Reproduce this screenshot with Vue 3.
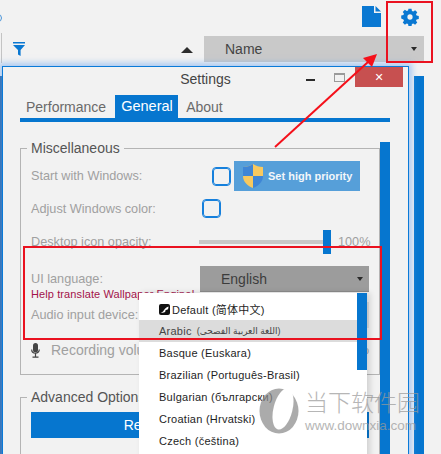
<script setup>
const languages = [
  { name: 'Default (简体中文)', icon: true },
  { name: 'Arabic', native: '(اللغة العربية الفصحى)', hover: true },
  { name: 'Basque (Euskara)' },
  { name: 'Brazilian (Português-Brasil)' },
  { name: 'Bulgarian (български)' },
  { name: 'Croatian (Hrvatski)' },
  { name: 'Czech (čeština)' }
];
</script>

<template>
  <div class="page">
    <span class="edge-line"></span>
    <span class="edge-desk"></span>
    <span class="edge-search"></span>

    <div class="icon-row">
      <svg class="doc" width="19" height="21" viewBox="0 0 19 21">
        <path d="M0 0H12V7H19V21H0Z" fill="#0a78d2" />
        <path d="M13.5 0L19 5.5H13.5Z" fill="#0a78d2" />
      </svg>
      <svg class="gear" width="18" height="18" viewBox="-1 -1 26 26">
        <path fill="#0a78d2" fill-rule="evenodd" d="M9.8 0h4.4l.6 3.2 1.9.8 2.7-1.8 3.1 3.1-1.8 2.7.8 1.9 3.2.6v4.4l-3.2.6-.8 1.9 1.8 2.7-3.1 3.1-2.7-1.8-1.9.8-.6 3.2H9.8l-.6-3.2-1.9-.8-2.7 1.8-3.1-3.1 1.8-2.7-.8-1.9L-.7 14.2V9.8l3.2-.6.8-1.9-1.8-2.7 3.1-3.1 2.7 1.8 1.9-.8zM12 8.2a3.8 3.8 0 1 0 0 7.6 3.8 3.8 0 0 0 0-7.6z" />
      </svg>
    </div>

    <div class="sort-row">
      <svg class="filter" width="12" height="14" viewBox="0 0 12 14">
        <path d="M0 0H12V1.4H0ZM0 3H12L7.6 8V14L5 12.6V8Z" fill="#0a78d2" />
      </svg>
      <span class="sort-up"></span>
      <div class="sort-select">
        <span>Name</span>
        <i class="caret"></i>
      </div>
    </div>

    <div class="behind">
      <div class="behind-bar"></div>
    </div>

    <div class="window">
      <div class="titlebar">
        <span></span>
        <span class="title">Settings</span>
        <div class="win-btns">
          <span class="btn-min"></span>
          <span class="btn-max"></span>
          <span class="btn-close">✕</span>
        </div>
      </div>

      <div class="tabs">
        <span class="tab">Performance</span>
        <span class="tab active">General</span>
        <span class="tab">About</span>
      </div>

      <div class="content">
        <div class="groups">
          <fieldset class="group misc">
            <legend>Miscellaneous</legend>
            <div class="row row-start">
              <label>Start with Windows:</label>
              <span class="check first"></span>
              <button class="priority">
                <svg width="20" height="24" viewBox="0 0 20 24">
                  <path d="M10 0C7 2 4 3 0 3V12C0 18 5 22 10 24Z" fill="#f8c95f" />
                  <path d="M10 0C13 2 16 3 20 3V12H10Z" fill="#f8c95f" />
                  <path d="M10 0C7 2 4 3 0 3V12H10Z" fill="#3f86d6" />
                  <path d="M10 12H20C20 18 15 22 10 24Z" fill="#3f86d6" />
                </svg>
                Set high priority
              </button>
            </div>
            <div class="row row-adjust">
              <label>Adjust Windows color:</label>
              <span class="check"></span>
            </div>
            <div class="row row-opacity">
              <label>Desktop icon opacity:</label>
              <div class="slider"><i></i></div>
              <span class="pct">100%</span>
            </div>
            <div class="row row-lang">
              <label>UI language:</label>
              <div class="select">
                <span>English</span>
                <i class="caret"></i>
              </div>
            </div>
            <div class="help">Help translate Wallpaper Engine!</div>
            <div class="row row-audio">
              <label>Audio input device:</label>
              <div class="select light"></div>
            </div>
            <div class="row row-rec">
              <svg width="9" height="15" viewBox="0 0 9 15">
                <rect x="2" y="0" width="5" height="9.5" rx="2.5" fill="#444" />
                <path d="M.7 6.5c0 5 7.6 5 7.6 0M4.5 10.5V13.5M1.5 14.2H7.5" fill="none" stroke="#444" stroke-width="1.2" />
              </svg>
              <label>Recording volume:</label>
              <span class="rec-pct">100%</span>
            </div>
          </fieldset>

          <fieldset class="group advanced">
            <legend>Advanced Options</legend>
            <button class="reset">Reset wallpaper settings</button>
          </fieldset>
        </div>
        <div class="scrollbar"></div>
      </div>
    </div>

    <div class="popup">
      <ul>
        <li v-for="lang in languages" :key="lang.name" :class="{ hover: lang.hover }">
          <svg v-if="lang.icon" class="lang-icon" width="11" height="11" viewBox="0 0 11 11">
            <rect width="11" height="11" rx="2" fill="#111" />
            <path d="M1.5 8.5C5 9 4 4.5 9.5 2.5C9.5 5 9 6 6.5 6C7 8 5 9.5 1.5 8.5Z" fill="#fff" />
          </svg>
          <span>{{ lang.name }}</span>
          <span v-if="lang.native" class="native">{{ lang.native }}</span>
        </li>
      </ul>
      <div class="popup-bar"><i></i></div>
    </div>

    <div class="callout"></div>
    <div class="callout gear-box"></div>
    <svg class="arrow" width="441" height="454" viewBox="0 0 441 454">
      <path d="M275 147L368 62" stroke="#f5101a" stroke-width="2" fill="none" />
      <path d="M377 54L372 67L363 58Z" fill="#f5101a" />
    </svg>

    <div class="watermark">
      <svg width="46" height="48" viewBox="0 0 46 48">
        <ellipse cx="25" cy="23" rx="19.5" ry="22.5" fill="#8c8c8c" />
        <ellipse cx="29" cy="21" rx="9.5" ry="21" fill="#fff" transform="rotate(14 29 21)" />
      </svg>
      <div>
        <div class="wm-cn">当下软件园</div>
        <div class="wm-url">www.downxia.com</div>
      </div>
    </div>
  </div>
</template>

<style scoped>
.page {
  position: relative;
  width: 441px;
  height: 454px;
  overflow: hidden;
  background: #f2f2f2;
  font-family: "Liberation Sans", "Noto Sans CJK SC", "DejaVu Sans", sans-serif;
}

.edge-line {
  position: absolute;
  left: 1px;
  top: 33px;
  width: 1px;
  height: 30px;
  background: #c4c4c4;
}

.edge-desk {
  position: absolute;
  left: 0;
  top: 76px;
  width: 2px;
  height: 378px;
  background: #1c5c9c;
}

.edge-search {
  position: absolute;
  left: -6px;
  top: 14px;
  width: 6px;
  height: 6px;
  border: 1.5px solid #4a94d8;
  border-radius: 50%;
}

.icon-row {
  display: flex;
  align-items: flex-start;
  height: 36px;
}

.doc {
  margin: 6px 0 0 362px;
}

.gear {
  margin: 8px 0 0 20px;
}

.sort-row {
  display: flex;
  align-items: center;
  height: 26px;
}

.filter {
  margin: 0 0 0 13px;
}

.sort-up {
  margin-left: 156px;
  border-left: 6px solid transparent;
  border-right: 6px solid transparent;
  border-bottom: 6px solid #2d2d2d;
  transform: translateY(1px);
}

.sort-select {
  display: flex;
  align-items: center;
  justify-content: space-between;
  margin-left: 11px;
  width: 220px;
  height: 26px;
  padding: 0 7px 0 21px;
  box-sizing: border-box;
  background: #c9c9c9;
  color: #444;
  font-size: 14px;
}

.caret {
  display: block;
  border-left: 3.5px solid transparent;
  border-right: 3.5px solid transparent;
  border-top: 4px solid #2a2a2a;
}

.behind {
  display: flex;
  justify-content: flex-end;
  padding: 14px 17px 0 0;
}

.behind-bar {
  width: 10px;
  height: 378px;
  background: #0676cf;
}

.window {
  position: absolute;
  left: 2px;
  top: 66px;
  width: 407px;
  height: 400px;
  padding-left: 17px;
  box-sizing: border-box;
  border: 1px solid #0a7ad8;
  background: #f2f2f2;
  box-shadow: 0 0 6px 3px rgba(110, 165, 240, 0.55);
}

.titlebar {
  display: grid;
  grid-template-columns: 1fr auto 1fr;
  margin-left: -17px;
  height: 20px;
  align-items: center;
}

.title {
  color: #444;
  font-size: 14px;
  transform: translateY(2px);
}

.win-btns {
  display: flex;
  justify-content: flex-end;
  align-items: center;
  height: 20px;
  padding-right: 5px;
}

.btn-min {
  width: 9px;
  height: 2px;
  margin: 5px 19px 0 0;
  background: #2a2a2a;
}

.btn-max {
  width: 9px;
  height: 6px;
  margin-right: 10px;
  border: 1px solid #9a9a9a;
  border-top-width: 2px;
}

.btn-close {
  width: 48px;
  height: 20px;
  line-height: 20px;
  text-align: center;
  background: #c75050;
  color: #fff;
  font-size: 11px;
  font-weight: bold;
}

.tabs {
  display: flex;
  height: 23px;
  margin-top: 8px;
  padding-left: 6px;
  font-size: 14px;
}

.tab {
  line-height: 25px;
  color: #6a6a6a;
}

.tab.active {
  margin: 0 8px 0 9px;
  padding: 0 6px;
  width: 51px;
  background: #0676cf;
  color: #fff;
  line-height: 23px;
  font-size: 14.5px;
}

.content {
  display: flex;
  align-items: flex-start;
  width: 370px;
  border-top: 4px solid #0676cf;
  padding-top: 18px;
}

.groups {
  width: 360px;
}

.group {
  margin: 0;
  padding: 0;
  width: 360px;
  box-sizing: border-box;
  border: 1px solid #b4b4b4;
}

.group legend {
  margin-left: 6px;
  padding: 0 4px;
  color: #555;
  font-size: 14px;
  line-height: 16px;
}

.misc {
  height: 235px;
}

.advanced {
  height: 90px;
  margin-top: 14px;
}

.scrollbar {
  width: 10px;
  height: 320px;
  margin-top: 2px;
  background: #0676cf;
}

.row {
  display: flex;
  align-items: center;
  padding-left: 10px;
  color: #a0a0a0;
  font-size: 12.7px;
}

.row label {
  flex: none;
  width: 169px;
}

.row-start {
  height: 30px;
  margin-top: 5px;
}

.row-adjust {
  height: 17px;
  margin-top: 9px;
}

.row-opacity {
  height: 24px;
  margin-top: 13px;
}

.row-lang {
  height: 26px;
  margin-top: 12px;
}

.row-audio {
  height: 26px;
  margin-top: 2px;
}

.row-rec {
  height: 16px;
  margin-top: 14px;
}

.row-rec label {
  width: auto;
  margin-left: 11px;
  font-size: 14px;
}

.rec-pct {
  margin-left: auto;
  padding-right: 10px;
}

.check {
  width: 15px;
  height: 15px;
  margin-left: 3px;
  border: 1px solid #1680dc;
  border-radius: 3px;
  outline: 0.5px solid #1680dc;
}

.check.first {
  margin-left: 13px;
}

.priority {
  display: flex;
  align-items: center;
  gap: 5px;
  width: 126px;
  height: 30px;
  margin-left: 4px;
  padding: 0 0 0 9px;
  border: 0;
  background: #569fd9;
  color: #f2f6fa;
  font-family: inherit;
  font-size: 11px;
  font-weight: bold;
  white-space: nowrap;
}

.slider {
  position: relative;
  width: 132px;
  height: 24px;
  margin-left: -1px;
}

.slider::before {
  content: "";
  position: absolute;
  left: 0;
  right: 6px;
  top: 10px;
  height: 4px;
  background: #c8c8c8;
}

.slider i {
  position: absolute;
  right: 0;
  top: 0;
  width: 8px;
  height: 24px;
  background: #0676cf;
}

.pct {
  margin-left: 7px;
  color: #a0a0a0;
}

.select {
  display: flex;
  align-items: center;
  justify-content: space-between;
  width: 169px;
  height: 26px;
  padding: 0 6px 0 21px;
  box-sizing: border-box;
  border-bottom: 1px solid #8c8c8c;
  background: #9c9c9c;
  color: #3c3c3c;
  font-size: 14px;
}

.select.light {
  background: #dedede;
  border: 0;
}

.help {
  height: 12px;
  margin-top: -4px;
  padding-left: 10px;
  color: #a3134a;
  font-size: 11px;
  line-height: 12px;
  letter-spacing: 0.1px;
}

.reset {
  display: block;
  width: 338px;
  height: 26px;
  margin: 7px 0 0 10px;
  border: 0;
  background: #0676cf;
  color: #fff;
  font-family: inherit;
  font-size: 14px;
}

.popup {
  position: absolute;
  left: 139px;
  top: 293px;
  display: flex;
  width: 228px;
  height: 170px;
  background: #fff;
  box-shadow: 3px 0 6px rgba(0, 0, 0, 0.14);
}

.popup ul {
  flex: 1;
  margin: 5px 0 0;
  padding: 0;
  list-style: none;
}

.popup li {
  display: flex;
  align-items: center;
  gap: 2px;
  height: 22px;
  padding-left: 20px;
  color: #1e1e1e;
  font-size: 11px;
  letter-spacing: 0.25px;
}

.popup li.hover {
  background: #dcdcdc;
  color: #444;
}

.native {
  margin-left: 3px;
  font-size: 9px;
  letter-spacing: 0;
}

.popup-bar {
  width: 10px;
}

.popup-bar i {
  display: block;
  height: 77px;
  background: #0676cf;
}

.callout {
  position: absolute;
  left: 23px;
  top: 246px;
  width: 355px;
  height: 90px;
  border: 2px solid #ea1220;
  pointer-events: none;
}

.gear-box {
  left: 386px;
  top: 1px;
  width: 43px;
  height: 58px;
}

.arrow {
  position: absolute;
  left: 0;
  top: 0;
  pointer-events: none;
}

.watermark {
  position: absolute;
  left: 254px;
  top: 388px;
  display: flex;
  gap: 5px;
  opacity: 0.72;
  pointer-events: none;
}

.wm-cn {
  margin-top: 2px;
  color: #9a9a9a;
  font-size: 23px;
  line-height: 26px;
  font-weight: 300;
}

.wm-url {
  margin-top: 2px;
  color: #9a9a9a;
  font-size: 13.5px;
  line-height: 16px;
  white-space: nowrap;
}
</style>
